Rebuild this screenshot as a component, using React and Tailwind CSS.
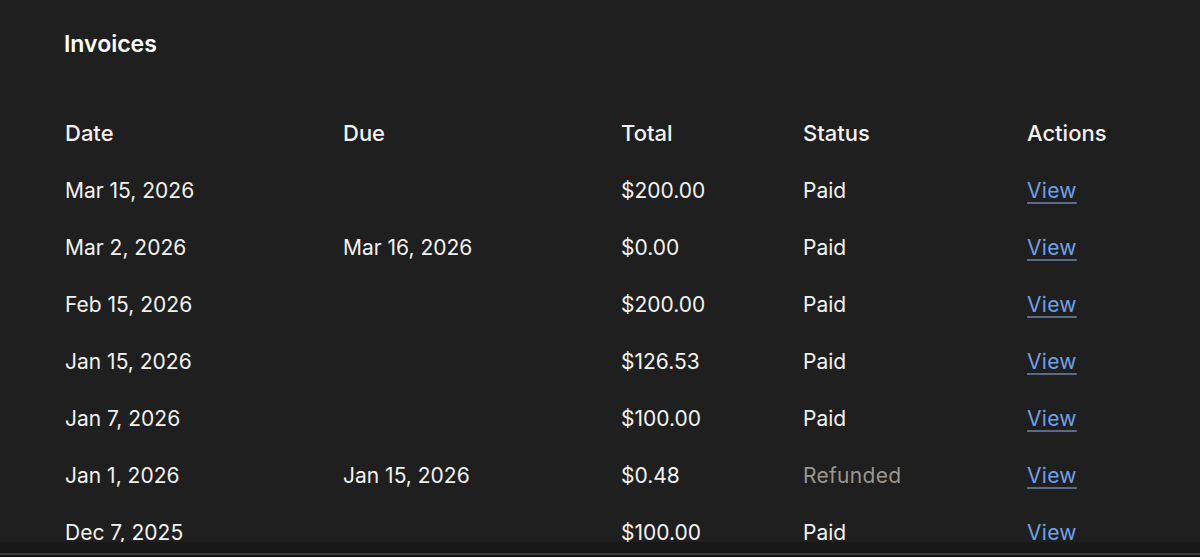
import React from "react";

const rows = [
  ["Mar 15, 2026", "", "$200.00", "Paid"],
  ["Mar 2, 2026", "Mar 16, 2026", "$0.00", "Paid"],
  ["Feb 15, 2026", "", "$200.00", "Paid"],
  ["Jan 15, 2026", "", "$126.53", "Paid"],
  ["Jan 7, 2026", "", "$100.00", "Paid"],
  ["Jan 1, 2026", "Jan 15, 2026", "$0.48", "Refunded"],
  ["Dec 7, 2025", "", "$100.00", "Paid"],
];

const cols = "grid grid-cols-[278px_278px_182px_224px_1fr] items-center h-[57px]";

export default function App() {
  return (
    <div
      className="w-[1200px] h-[557px] bg-[#1f1f1f] text-[#f2f2f2] overflow-hidden flex flex-col"
      style={{ fontFamily: "Inter, 'Noto Sans', sans-serif" }}
    >
      <div className="flex-1 overflow-hidden pl-[65px] pr-[64px] pt-[30px]">
        <h2 className="-ml-[1px] text-[23px] font-semibold leading-[28px] text-white">Invoices</h2>
        <div className="mt-[47px]">
          <div className={`${cols} text-[22px] font-medium`}>
            <div>Date</div>
            <div>Due</div>
            <div>Total</div>
            <div>Status</div>
            <div>Actions</div>
          </div>
          {rows.map((r, i) => (
            <div key={i} className={`${cols} text-[21px]`}>
              <div>{r[0]}</div>
              <div>{r[1]}</div>
              <div>{r[2]}</div>
              <div className={r[3] === "Refunded" ? "text-[#9c978f] tracking-[0.3px]" : ""}>{r[3]}</div>
              <div>
                <a
                  href="#"
                  className="text-[#70a0e6] tracking-[0.3px] underline decoration-[#5b6b87] decoration-2 underline-offset-[4px]"
                >
                  View
                </a>
              </div>
            </div>
          ))}
        </div>
      </div>
      <div className="h-[15px] shrink-0 bg-[#181818] flex flex-col justify-end">
        <div className="h-[2px] bg-[#3a3a3a]" />
        <div className="h-[2px] bg-[#161616]" />
      </div>
    </div>
  );
}
